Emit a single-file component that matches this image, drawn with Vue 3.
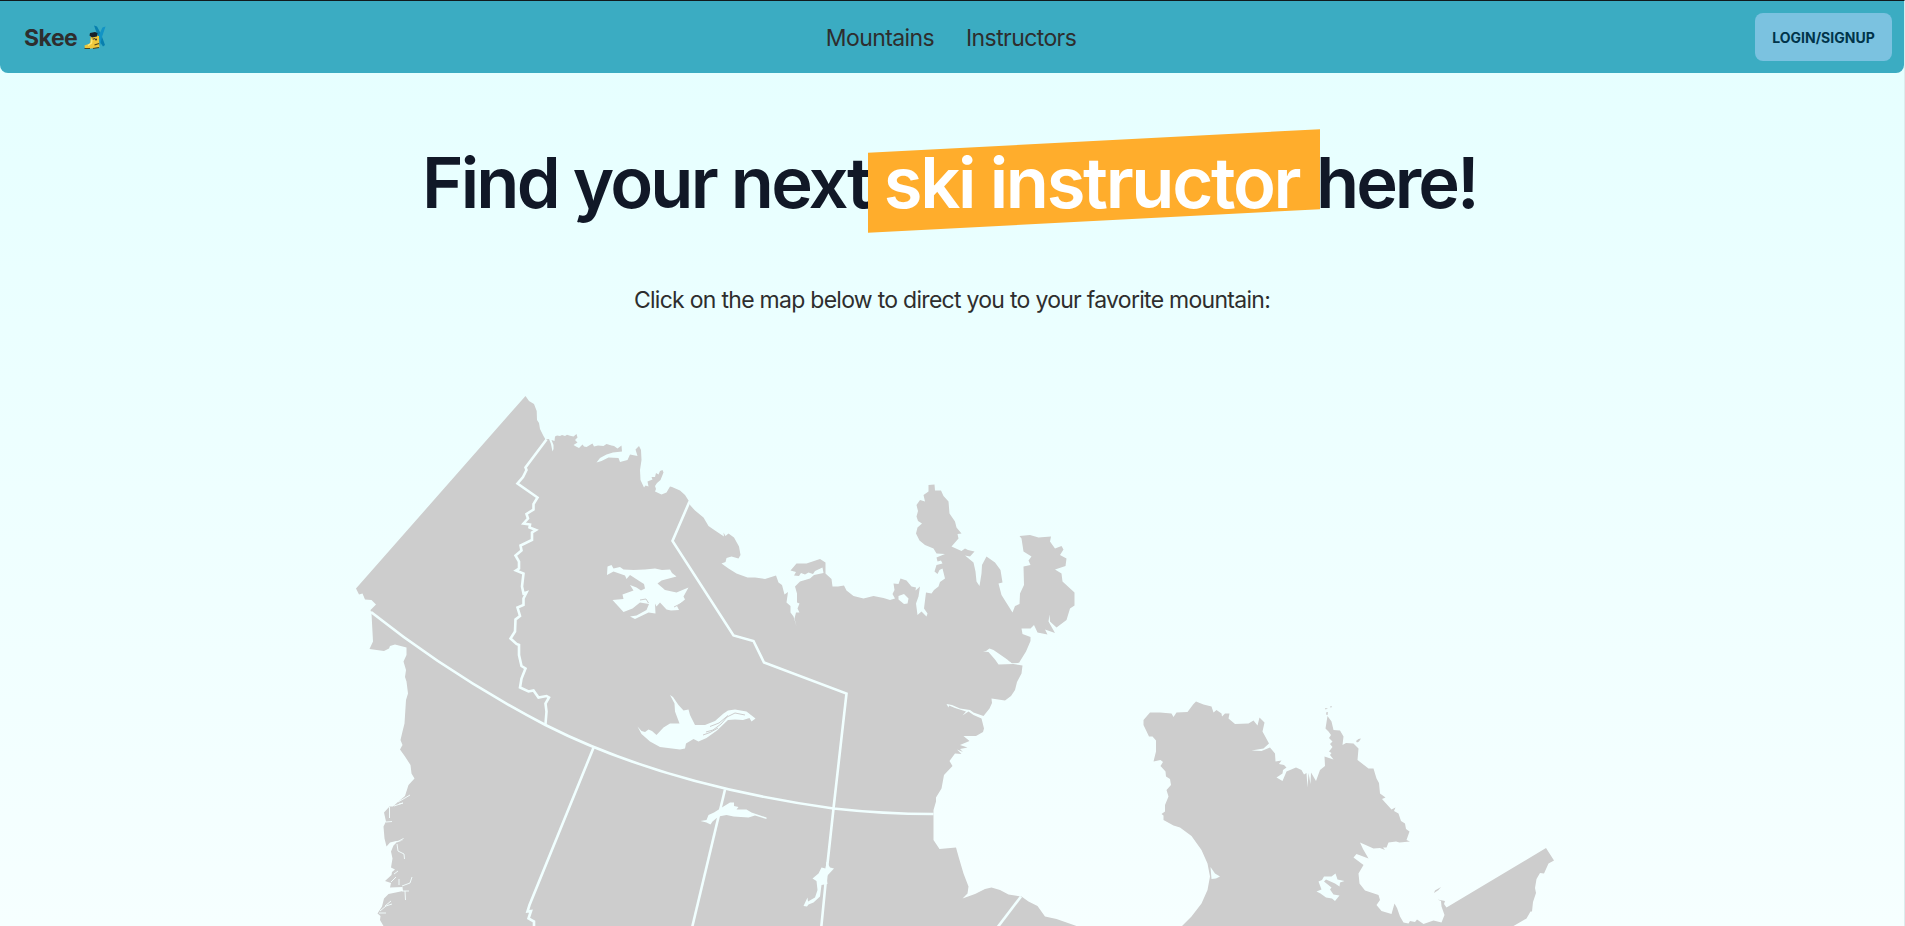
<script setup>
const links = ['Mountains', 'Instructors']

const mainland = 'M525.5 396L529 401 534 404 536.7 411 537 420 539 423 540 429 543.5 436 545.5 439.5 549 439 551 444 552.5 451.5 553.5 449 553.5 445 551.5 440 554.5 441 555 436.5 557 435.5 560 436 562 435 565 436 567 434.7 570 435.7 573.5 436.5 576.5 434 577.5 437.5 575 440 577.5 442.5 573.5 445 576 446.5 579 448 582.5 444.5 584 446.5 586.5 447 592.5 443.5 594 446.5 598 445.5 603.5 446 606.5 444 611.5 445.5 614 446 617.5 448.5 621.5 445.5 622 451.5 613 452.5 606.5 454.5 600 458 596.5 462.5 601.5 461 608.5 457.5 618.5 458 620 462 627.5 460 630 454.5 637.5 456 635.5 449.5 639 446 641 450 641.5 460 640 470 640.5 480 644 487.5 645.5 485.5 648.5 486.5 647.5 481.5 652.5 479.5 651.5 477 655 477 656 473 658.5 474.5 660 471 662.5 470 663.5 472.5 660.5 480 657 483 655 486 656 489 655 491.5 661.5 494.5 666.5 492.5 670 486.5 672 487 680 490.5 685 495 688.5 500.5 690 505 695 510.5 703.5 517.5 708.5 526 715 530.5 724 536.5 723.5 532.5 725.5 536 728.5 533.5 734 537.5 739 546.5 740.5 555 738.5 558.5 731.5 556.5 726.5 558 725.5 562 721.5 563.5 728.5 568.5 736.5 573.5 747.5 577.5 755 577.5 765 579 776 575.5 778.5 582.5 782 585 784.5 594.5 788 592 786.5 602.5 790.5 606 790.5 612.5 793.5 616.5 796.5 626.5 794.5 618.5 796 612.5 799.5 612.5 797.5 608.5 799.5 603.5 797 602.5 797 593.5 795 586.5 800 581.5 810 578.5 814 575 823.5 573 822.5 567.5 815 571 813 574 808.5 572.5 805 574.5 801 573 799 576 794 575.5 796 572 790.5 570.5 796.5 563.5 806.5 563.5 814 561 820 559 825.5 562.5 825.5 573.5 831.5 579 832.5 586.5 838 586.5 844 585.5 846.5 590.5 853.5 596 863.5 598.5 873.5 596 883.5 598 890 600 895 598.5 892.5 594 894.5 590 893.5 583.5 898.5 584 900.5 578.5 906.5 580.5 911.5 586.5 916 587.5 915.5 590.5 920 586.5 918.5 596.5 916 603.5 917.5 615 921.5 611.5 926.5 616.5 927.5 613.5 924 608.5 926 592.5 931.5 593.5 934 590 938.5 586.5 940 582 945 578.5 942.5 568.5 939.5 570 937.5 574 934.5 571.5 936.5 565 942.5 563.5 941 560.5 937.5 561.5 936.5 557.5 945 554 936.5 553.5 933.5 548.5 925 545 919.5 540.5 916 533.5 917.5 527.5 922 523.5 918 521 916.5 516.5 918 511 916.5 505 920 500 925 501.5 923.5 495 928.5 491.5 928.5 485 934.5 484.5 935 490.5 941 490.5 943.5 496 948.5 501.5 949.5 513.5 955 521.5 956.5 527.5 961.5 533.5 957.5 534 958.5 538.5 951.5 546.5 961.5 551 965 548.5 968 550 974.5 551.5 970 556.5 965 555.5 973.5 562.5 975.5 571.5 976.5 581.5 979.5 586 981.5 573.5 982 565 986.5 556.5 995 562.5 1000.5 570 1002.5 582.5 998.5 583.5 1001.5 595 1012.5 612.5 1015 606 1019.5 604 1020 593.5 1024 585 1023.5 566.5 1030.5 565 1028.5 560.5 1031.5 556.5 1023.5 551.5 1021.5 538.5 1019.5 536 1030 535 1038.5 537.5 1051 536.5 1050 541.5 1055 548.5 1061.5 546 1063.5 549.5 1060 555 1066.5 558.5 1065.5 566 1055 569.5 1061.5 573.5 1062.5 581.5 1074.5 592.5 1074.5 605.5 1070 608.5 1066.5 620 1056.5 627.5 1050 621.5 1049.5 614.5 1048.5 621.5 1055 633 1045 629.5 1047.5 634.5 1037.5 632.5 1034 625 1030.5 628.5 1021.5 628.5 1022.5 634 1030.5 637 1030.5 641 1026 651.5 1019.5 662 1011.5 662.5 1001.5 655.5 993.5 650 989.5 648.5 986 651 983 651.5 988.5 652 995 659.5 998.5 664.5 1013.5 664 1022.5 665.5 1021.5 673.5 1017 682 1015 690 1011 696 1005 700.5 991.5 698.5 992 703 989.5 708.5 983.5 716 973.5 712.5 970 710 960 708.5 952 705 946.5 704 948.5 707.5 949 705.5 955 708 966 711.5 962.5 715.5 968.5 711.5 973.5 715 981.5 718.5 984 728.5 983 732 976 736 963.5 736 969.5 741 960 745 967.5 747.5 960 749 963 752 957 749.5 961.5 754 955 753.5 949.5 761 952.5 766 944 775 941.5 788.5 936 797.5 936 801.5 933.5 810 933.5 840 939.5 849 956 847.5 958.5 856.5 963.5 873.5 968.5 886.5 967.5 893.5 962.5 898.5 975 894 985 889 991.5 887.5 1000 890 1008.5 894.5 1021.5 896.5 1028.5 901.5 1037.5 906 1045 916.5 1056.5 919 1066.5 922.5 1076.5 926 1080 930H384L383.5 926 380 920 380.5 916 377.5 913.5 382 906.5 384 898.5 388.5 894 403 891 402.5 887 390 887.5 391 883 385 881 391.5 875 392 872 395 869.5 391 867.5 392.5 858.5 391 851.5 393.5 845.5 397 842 403.5 840.5 396 841 390 842.5 386.5 846.5 384.5 838.5 383.5 826.5 386 821.5 384 812.5 389.5 806.5 393 806.5 398.5 801.5 405 796 408.5 785 414.5 778.5 411.5 773.5 410.5 765 405 756.5 400 749.5 402.5 745 400.5 740 402.5 731.5 404.5 723.5 406 700 408 693.5 406.5 681.5 405 677 406 670 403.5 661.5 406.5 655 406.5 647.5 395 644.5 390 646 389 648.5 384 651 369.5 649 373 641.5 371.5 613.5 370.5 610 376 604.5 371.5 600 365 599.5 362.5 593.5 359 594.5 356 588.5Z'

const quebec = 'M1178 930L1191.5 916.5 1201.5 903.5 1207.5 890 1210 876.5 1207.5 863.5 1201.5 850 1191.5 836 1180 827.5 1173.5 825.5 1163.5 820 1163.5 815.5 1161.5 814 1165 811.5 1165 805 1168.5 796.5 1166.5 790 1171 785 1170 779 1166 776.5 1165.5 771.5 1160.5 766 1163 762 1160.5 760 1153.5 761.5 1156 751.5 1156 740.5 1152.5 736.5 1149 736.5 1143.5 725 1143.5 720 1150 712.5 1160 712.5 1171.5 713.5 1173.5 717 1176.5 712.5 1187.5 712 1193.5 704 1196 701.5 1203.5 704.5 1211.5 706.5 1213.5 712.5 1216.5 710 1221.5 713.5 1222 716.5 1225 713.5 1229.5 713.5 1228.5 718.5 1235 724 1248.5 723.5 1253.5 720.5 1257.5 725.5 1259.5 717.5 1264.5 722.5 1262.5 731.5 1269 743.5 1263.5 748.5 1251.5 750.5 1261.5 751 1270 747.5 1275 753.5 1275.5 761.5 1281.5 760.5 1279 764 1284 765 1286.5 767.5 1283 770 1282.5 773.5 1276.5 777.5 1282.5 781 1286.5 771.5 1296 767.5 1301.5 770 1304 774.5 1306.5 773 1307.5 787.5 1308.5 773 1310.5 784 1311 772.5 1316 781 1320 770 1325 766 1324.5 756.5 1333.5 759.5 1330 755 1331.5 753 1329 751.5 1332.5 747 1330 744 1332.5 741.5 1329 738 1331 735 1328.5 731.5 1325.5 728.5 1327.5 716 1331.5 721.5 1333.5 730 1340 730.5 1343.5 736.5 1342.5 745 1346 743 1353.5 743.5 1358.5 748.5 1357.5 760 1368.5 768.5 1373.5 768.5 1376.5 778.5 1379 783 1380 793.5 1385.5 797.5 1382 799 1391.5 809.5 1395.5 807.5 1394 811 1398.5 813.5 1401 821 1405 823.5 1406 829 1409.5 831.5 1406.5 840 1410 841.5 1399.5 842.5 1396 841.5 1388.5 842.5 1386.5 847.5 1383 847.5 1385 850 1380 848 1373.5 848.5 1360 842.5 1363 849 1368.5 858.5 1356.5 854 1353.5 857.5 1363.5 865 1358.5 873.5 1359.5 883.5 1365 890.5 1378.5 895 1380 900 1376.5 905 1381.5 911 1391.5 914 1394.5 903.5 1397 908 1400 916.5 1403.5 922.5 1408.5 923.5 1410 921 1415 922 1417 919.5 1423.5 924 1433.5 920.5 1441.5 922.5 1444.5 915 1441.5 906.5 1441 901 1437.5 899.5 1445 901 1444 904 1446.5 907.5 1546 848 1554 860.5 1548.5 863.5 1544 873.5 1540 873 1536.5 879 1535 888 1536 893 1533 902 1532 911.5 1530.5 911.5 1526.5 918.5 1513.5 926V930Z'

const lakes = [
  'M607 575L607.5 566.5 611.5 565 613.5 568.5 620 567 623.5 569.5 633.5 570 645 569.5 655 568.5 662 570 670 569.5 672 573 676.5 576.5 661.5 580.5 657.5 583.5 665 590 676.5 592.5 688.5 587.5 683.5 596.5 685 599.5 677 606 679 610 671 610.5 666.5 609.5 660 602.5 656.5 606.5 655 603.5 655.5 613.5 648.5 612.5 635 619 630 616.5 636.5 615.5 646.5 610 649 604 640 602.5 632.5 608.5 623.5 612 612.5 600 623.5 599 622.5 594.5 633.5 590.5 630 585 636.5 587.5 641 590.5 645 588.5 644 584 640 581.5 630 575 626.5 579 625 575.5 613.5 571.5Z',
  'M637.5 726.5L641.5 731 645 732 648.5 729.5 652 731 656.5 735 663.5 727.5 670 723.5 679.5 723.5 675 711.5 674.5 703.5 670 695 673 697 678.5 705 683.5 710.5 688.5 709.5 690 715 695 725 705 725 715 721 723.5 713.5 728 710.5 735 709.5 746.5 711.5 755.5 718.5 751.5 721.5 749.5 718 743 720 735 719.5 728 720 717 730.5 706.5 738 698.5 741.5 693.5 739 686 743.5 685 748.5 680 749.5 660 747 650 741.5 641.5 734Z',
  'M700.5 821L706.5 820 708.5 815 714 812.5 723.5 806.5 730 802.5 734 802.5 734 806 738.5 807 736.5 809.5 746.5 809.5 751.5 812.5 766.5 817.5 766.5 819 755 815.5 748.5 817.5 733.5 816.5 726.5 815 718.5 816.5 712.5 821.5 710.5 824.5 706.5 822.5Z',
  'M826.5 861.5L830 867.5 834 868.5 826.5 876.5 827.5 884 821.5 885 820 896.5 813.5 902.5 808.5 904.5 807 906.5 803.5 906 807.5 897.5 808 901.5 815 897.5 817.5 890 816.5 881 812.5 878.5 818.5 873.5 821.5 867.5 825.5 868.5Z',
  'M898.5 596L904 594 908.5 598.5 907.5 603.5 904 604 898.5 599.5Z',
  'M1316.5 891.5L1321.5 889.5 1318.5 881.5 1322 880 1324 876.5 1331.5 876.5 1335.5 873.5 1337.5 879.5 1344.5 881 1340 882.5 1339.5 886.5 1335 883.5 1326 879.5 1324 881.5 1331.5 887.5 1330 889.5 1333.5 894.5 1339.5 895.5 1335 901 1332 898.5 1326 897.5 1320.5 893.5Z',
  'M1210.5 867L1215 873.5 1220 876.5 1216 878.5 1211.5 879Z',
]

const islands = [
  'M1434 893L1435 890.5 1441 887 1438.5 890Z',
  'M1356 741L1358.5 739 1361 738.5 1359 741.5 1357 742.5Z',
  'M1326 712.5L1328 712 1327.5 715 1326.5 715Z',
  'M1325 708L1328 708.5 1325.5 709.5Z',
  'M1330 706.5L1332 706 1331 708Z',
  'M1007 659.5L1012 662 1020 662 1018 663 1012 663.3Z',
]

const borders = [
  'M546.5 439.5L525.5 467.5 526.5 470 523 477 517.5 483.5 537.5 497.5 533.5 504 533.5 509.5 526.5 514 528 518.5 523.5 523.5 530 524.5 529.5 527.5 536 530 532 532.5 532 540 520.5 545.5 521.5 550.5 515.5 555.5 519 561.5 519 568.5 516 570.5 523.5 573.5 522 586.5 523.5 593.5 526.5 592.5 523.5 598.5 523.5 605 517.5 607.5 520 616 515.5 619.5 515 631.5 510.5 638.5 516.5 644 519 645 519 655 521.5 666 525.5 668.5 521.5 678.5 520 687.5 528.5 691.5 533.5 690.5 538.5 697.5 546.5 696 549 697.5 545.5 703.5 546.5 711.5 545.5 724',
  'M371 612Q450 675 545.5 725Q664 785 833.5 808.5Q883 814 933.5 814',
  'M594 746.5L529.5 905 527.5 911.5 531 911 528.5 918.5 534 921.5V930',
  'M725 789.5L691.5 930',
  'M689.5 501.5L672.5 541 733.5 635.5 753.5 641 764 662.5 846.5 693.5 833.5 808.5 827.5 863.5 821 930',
  'M1021 896.5L997 928',
]

const inlets = [
  'M398 802L405 798 410 795',
  'M394 806L403 803 399 804',
  'M389.5 807V818M386 822L392 821.5',
  'M397 842L403.5 838.5M397 844L398 851 404 854 404.5 859',
  'M394 874L398 871M391 882L396 877M402 886L410 883 412 877M402 891H409M405 891L405.5 900',
  'M380 911L386 906 392 904M385 906L391 901M379 913L386 913',
  'M399 879V885',
]

const streaks = [
  'M706 732L713 730 721 724 727 717 735 713 745 715',
  'M703 735L710 732.5 718 728',
  'M710 726.5L719 723 728 715.5',
  'M640 600L646 599 648.5 603',
  'M674 607L684 602',
]
</script>

<template>
  <div class="page">
    <nav class="navbar">
      <div class="brand">
        <span class="brand-name">Skee</span>
        <svg class="boot" viewBox="0 0 22 25" width="22" height="25">
          <path d="M10 0.5L13 1.5 17 9 21 20 19 21.5 16 17 12 6Z" fill="#087fae" />
          <path d="M21.5 1.5L18.5 2.5 15 10 13 20 16 21 18 12Z" fill="#1293c5" />
          <path d="M7 10L15 11 15.5 22.5 7 23.5 1 23.5 0.5 20.5 6 18.5Z" fill="#efc83b" />
          <path d="M6 8L11 7 13.5 8 13 11.5 8 12.5 5.5 10.5Z" fill="#18212a" />
          <path d="M0.5 23.5H6M9 23.5L15 22.5M10.5 20L15 18.5M8 14.5L11 13.5" stroke="#4c431d" stroke-width="1.2" fill="none" />
          <path d="M8 14L7.5 18 4 20.5" stroke="#ffe976" stroke-width="1.4" fill="none" />
          <circle cx="12" cy="14.5" r="1" fill="#2b2d25" />
        </svg>
      </div>
      <div class="links">
        <a v-for="link in links" :key="link" class="link">{{ link }}</a>
      </div>
      <div class="actions"><button class="login">LOGIN/SIGNUP</button></div>
    </nav>

    <main class="content">
      <h1 class="title">
        <span class="before">Find your next</span>
        <span class="highlight"><span class="highlight-text">ski instructor</span></span>
        <span class="after">here!</span>
      </h1>
      <p class="lead">Click on the map below to direct you to your favorite mountain:</p>
      <svg class="map" viewBox="340 380 1224 546" width="1224" height="546">
        <path class="land" :d="mainland" />
        <path class="land" :d="quebec" />
        <path v-for="d in borders" :key="d" class="border" :d="d" />
        <path v-for="d in lakes" :key="d" class="lake" :d="d" />
        <path v-for="d in islands" :key="d" class="land" :d="d" />
        <path v-for="d in inlets" :key="d" class="inlet" :d="d" />
        <path v-for="d in streaks" :key="d" class="streak" :d="d" />
      </svg>
    </main>
  </div>
</template>

<style>
body {
  margin: 0;
  overflow: hidden;
}
</style>

<style scoped>
.page {
  box-sizing: border-box;
  height: 926px;
  overflow: hidden;
  border-top: 1px solid #111a1c;
  border-right: 1px solid #dceced;
  background: linear-gradient(#e5ffff, #f6ffff);
  color: #2e2e2e;
  font-family: Inter, "Liberation Sans", sans-serif;
}
.navbar {
  box-sizing: border-box;
  display: grid;
  grid-template-columns: 1fr auto 1fr;
  align-items: center;
  height: 72px;
  padding: 0 12px 0 24px;
  border-radius: 0 0 8px 8px;
  background: #3bacc2;
}
.brand {
  display: flex;
  align-items: center;
  gap: 7px;
}
.brand-name {
  padding-top: 2px;
  font-size: 23px;
  font-weight: 700;
  letter-spacing: -0.5px;
}
.boot {
  display: block;
}
.links {
  display: flex;
  gap: 32px;
  margin-right: 14px;
  padding-top: 2px;
}
.link {
  font-size: 23px;
  letter-spacing: -0.6px;
}
.actions {
  display: flex;
  justify-content: flex-end;
}
.login {
  width: 137px;
  height: 48px;
  padding: 0;
  border: 0;
  border-radius: 8px;
  background: #7bc2e0;
  color: #00344a;
  font-family: inherit;
  font-size: 14px;
  font-weight: 700;
}
.content {
  display: flex;
  flex-direction: column;
  align-items: center;
}
.title {
  display: flex;
  width: 1060px;
  height: 80px;
  margin: 68px 0 0;
  align-items: flex-start;
  color: #111827;
  font-size: 70.5px;
  font-weight: 600;
  line-height: 83px;
  letter-spacing: -2.8px;
  white-space: nowrap;
}
.before {
  flex: none;
  width: 446px;
}
.highlight {
  flex: none;
  width: 452px;
  height: 80px;
  background: #ffad2c;
  color: #fff;
  letter-spacing: -2.3px;
  text-align: center;
  transform: skewY(-3deg);
}
.highlight-text {
  display: block;
  margin-left: -5px;
  transform: skewY(3deg);
}
.after {
  margin-left: -4px;
  letter-spacing: -3px;
}
.lead {
  margin: 63px 0 0;
  font-size: 23px;
  line-height: 32px;
  letter-spacing: -0.72px;
}
.map {
  display: block;
  flex: none;
  margin-top: 64px;
}
.land {
  fill: #cdcdcd;
}
.border {
  fill: none;
  stroke: #f1ffff;
  stroke-width: 2.6;
}
.lake {
  fill: #f1ffff;
}
.inlet {
  fill: none;
  stroke: #f4ffff;
  stroke-width: 0.9;
}
.streak {
  fill: none;
  stroke: #cdcdcd;
  stroke-width: 1;
}
</style>
